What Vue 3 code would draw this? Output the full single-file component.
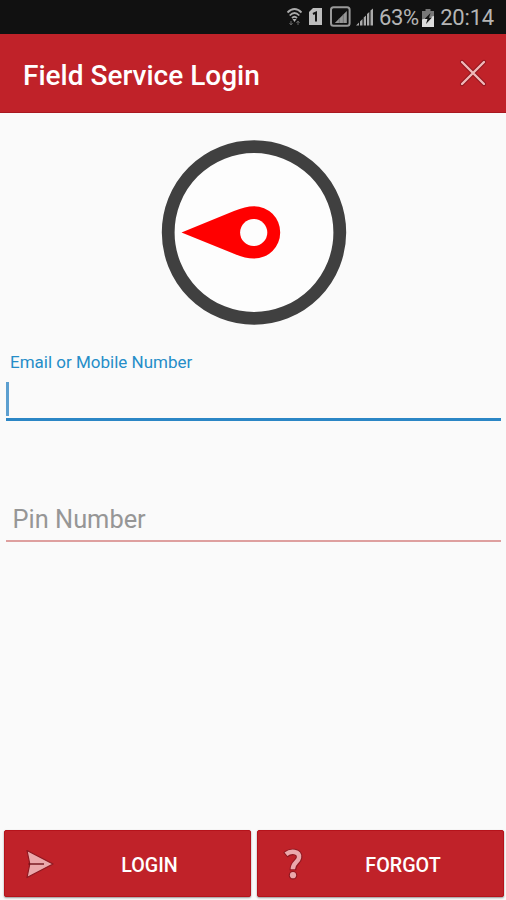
<script setup>
import { ref } from 'vue'
const email = ref('')
const pin = ref('')
</script>

<template>
  <main class="screen">
    <div class="status">
      <svg class="status-icons" width="93" height="24" viewBox="0 0 93 24">
        <g fill="none" stroke="#aaa" stroke-width="1.8">
          <path d="M1.500 7.500Q8.500 0.500 15.500 7.500" />
          <path d="M3.700 10.500Q8.500 5.500 13.300 10.500" />
          <path d="M6 13Q8.500 10.500 11 13" />
        </g>
        <path d="M6.500 14h4l-2 3z" fill="#b4b4b4" />
        <path d="M5 16v4M3.500 18l1.500 2 1.500-2M12 20v-4M10.500 18l1.500-2 1.500 2" fill="none" stroke="#666" stroke-width="1" />
        <path d="M27 3h9v17H23V7z" fill="#bdbdbd" />
        <path d="M27 9l3-1.500V16.500" fill="none" stroke="#151515" stroke-width="2" />
        <rect x="45" y="2.200" width="18.600" height="18.600" rx="2.500" fill="none" stroke="#999" stroke-width="2" />
        <path d="M48.800 18L60.800 6v12z" fill="#969696" />
        <path d="M57.300 9v9M53.300 13v5" stroke="#666" stroke-width=".7" />
        <path d="M70 20.500l3-3v3zM74 16.500l2.500-2.500v6.500h-2.500zM77.700 12.500l2.300-2v10h-2.300zM81 9l2.300-2v13.500H81zM84.500 5.500l2.500-2v17h-2.500z" fill="#aaa" />
      </svg>
      <span class="percent">63%</span>
      <svg class="battery" width="12" height="18" viewBox="0 0 12 18">
        <path d="M3.500 0h5v2H12v16H0V2h3.500z" fill="#777" />
        <path d="M0 10.500L12 7v11H0z" fill="#ddd" />
        <path d="M8.500 4L2.500 10h3l-1.500 5 6-6.500H7z" fill="#151515" />
      </svg>
      <span class="time">20:14</span>
    </div>

    <header class="bar">
      <h1>Field Service Login</h1>
      <button class="close" aria-label="Close">
        <svg width="30" height="30" viewBox="0 0 30 30" fill="none" stroke-linecap="round">
          <path d="M4 4l22 22M26 4L4 26" stroke="#8e141c" stroke-width="4.200" />
          <path d="M4 4l22 22M26 4L4 26" stroke="#f0b8b9" stroke-width="2.400" />
        </svg>
      </button>
    </header>

    <section class="content">
      <svg class="compass" width="186" height="186" viewBox="0 0 186 186">
        <circle cx="93" cy="92.500" r="85.800" fill="#fdfdfd" stroke="#404040" stroke-width="12.800" />
        <path d="M20.500 92.500L73 71C81 67.700 87 66.200 93 66.200A26.200 26.200 0 0 1 93 118.600C87 118.600 81 117.100 73 113.800Z" fill="#f00" />
        <circle cx="92.700" cy="92.500" r="13.600" fill="#fdfdfd" />
      </svg>

      <label class="field email">
        <span class="label">Email or Mobile Number</span>
        <span class="entry">
          <i class="caret"></i>
          <input v-model="email" type="text" />
        </span>
      </label>

      <label class="field pin">
        <input v-model="pin" type="password" placeholder="Pin Number" />
      </label>
    </section>

    <footer class="actions">
      <button class="action">
        <svg width="32" height="32" viewBox="0 0 32 32">
          <path d="M3 2.500L29 16 3 29.500l2.500-12V14.500z" fill="#eba8ab" stroke="#8e1820" stroke-width="1.200" stroke-linejoin="round" />
          <path d="M4.500 16H20" stroke="#711119" stroke-width="1.400" />
        </svg>
        <span>LOGIN</span>
      </button>
      <button class="action forgot">
        <svg width="32" height="32" viewBox="0 0 32 32" fill="none" stroke-linecap="butt" stroke-linejoin="round">
          <g stroke="#8e1820">
            <path d="M8.400 6.900C13.500 2.500 23 2.800 22 9.700C21.300 14 15.800 14.800 15.800 22.200" stroke-width="6.600" />
            <circle cx="16" cy="27.200" r="3" stroke-width="2.600" />
          </g>
          <path d="M9 6.300C13.500 2.500 23 2.800 22 9.700C21.300 14 15.800 14.800 15.800 21.200" stroke="#eba8ab" stroke-width="4.400" />
          <circle cx="16" cy="27.200" r="3.100" fill="#eba8ab" />
        </svg>
        <span>FORGOT</span>
      </button>
    </footer>
  </main>
</template>

<style>
body { margin: 0; }
</style>

<style scoped>
* { box-sizing: border-box; }
.screen {
  display: flex;
  flex-direction: column;
  width: 506px;
  height: 900px;
  overflow: hidden;
  background: #fafafa;
  font-family: Roboto, "Liberation Sans", sans-serif;
}
button { border: 0; padding: 0; font: inherit; background: none; }
.status {
  display: flex;
  align-items: center;
  height: 34px;
  padding: 1px 12px 0 286px;
  background: #111;
  color: #b5b5b5;
  font-size: 22px;
  line-height: 34px;
  white-space: nowrap;
}
.status-icons, .battery { flex: none; }
.status-icons { margin-top: -1px; }
.percent { width: 41px; margin-right: 3px; font-size: 22px; letter-spacing: -.4px; }
.time { margin-left: 6px; letter-spacing: -.2px; }
.bar {
  display: flex;
  align-items: center;
  justify-content: space-between;
  height: 79px;
  padding: 0 18px 0 23px;
  background: #c02229;
  border-bottom: 1px solid #a81820;
}
h1 {
  margin: 5px 0 0;
  color: #fff;
  font-size: 28px;
  font-weight: 500;
  line-height: 32px;
  white-space: nowrap;
}
.close { display: flex; }
.content {
  display: flex;
  flex-direction: column;
  flex: 1;
  padding: 27px 5px 0 6px;
}
.compass { display: block; align-self: center; }
.field { display: flex; flex-direction: column; }
.field input {
  width: 100%;
  border: 0;
  outline: 0;
  padding: 0;
  background: transparent;
  font: inherit;
  color: #333;
}
.email { margin-top: 26px; border-bottom: 3px solid #2b86c5; }
.label { padding-left: 4px; color: #258dc8; font-size: 17px; line-height: 20px; }
.entry { display: flex; height: 46px; padding-top: 10px; }
.caret { flex: none; width: 3px; height: 34px; background: #5c9fd0; }
.pin { height: 121px; justify-content: flex-end; border-bottom: 2px solid #dea09f; }
.pin input { height: 44px; padding: 1px 0 0 6.500px; font-size: 25.400px; }
.pin input::placeholder { color: #969696; opacity: 1; }
.actions { display: flex; gap: 6px; padding: 0 2px 3px 4px; }
.action {
  display: flex;
  align-items: center;
  flex: 1;
  height: 67px;
  padding-left: 19px;
  border: 1px solid #b5131b;
  border-radius: 2px;
  background: #c02229;
  box-shadow: 0 1px 2px rgba(0, 0, 0, .4);
  color: #fff;
  font-size: 19.700px;
  font-weight: 500;
}
.action span { flex: 1; padding: 3px 7px 0 0; text-align: center; }
.forgot span { padding-right: 6px; }
</style>
